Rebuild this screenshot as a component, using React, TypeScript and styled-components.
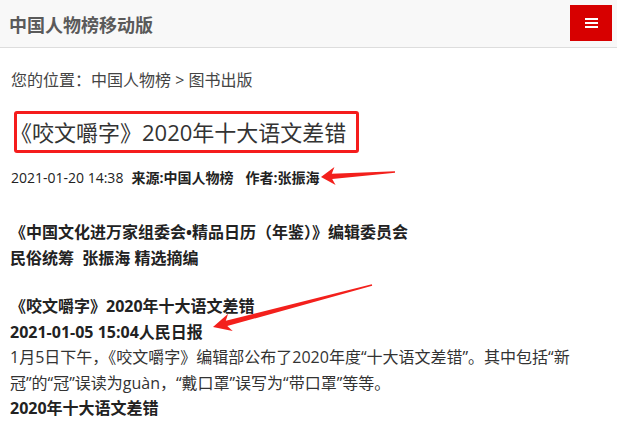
import React from "react";
import styled, { createGlobalStyle } from "styled-components";

const GlobalStyle = createGlobalStyle`
  html, body {
    margin: 0;
    padding: 0;
    background: #ffffff;
  }
  body {
    font-family: "Open Sans", "Noto Sans CJK SC", sans-serif;
    color: #333333;
    width: 617px;
    height: 422px;
    overflow: hidden;
  }
`;

const Page = styled.div`
  position: relative;
  width: 617px;
  height: 422px;
  overflow: hidden;
`;

const Header = styled.header`
  height: 47px;
  background: #f8f8f8;
  border-bottom: 1px solid #dddddd;
  display: flex;
  align-items: center;
  justify-content: space-between;
  padding: 0 5px 0 9px;
`;

const SiteTitle = styled.div`
  font-family: "Noto Sans CJK SC", sans-serif;
  font-size: 18px;
  font-weight: 700;
  color: #5a5a5a;
  line-height: 24px;
  margin-top: 1px;
`;

const MenuButton = styled.button`
  width: 42px;
  height: 36px;
  margin-top: -1px;
  border: none;
  border-radius: 0;
  background: #d70000;
  display: flex;
  flex-direction: column;
  align-items: center;
  justify-content: center;
  gap: 2.2px;
  padding: 0;
`;

const MenuBar = styled.span`
  display: block;
  width: 13px;
  height: 1.8px;
  background: #ffffff;
`;

const Main = styled.main`
  padding: 0 10px;
`;

const Breadcrumb = styled.div`
  margin-top: 20px;
  font-size: 16px;
  line-height: 24px;
  color: #444444;
  padding-left: 1px;
`;

const TitleBox = styled.h1`
  display: inline-block;
  margin: 19px 0 0 4px;
  border: 3px solid #f51c1c;
  border-radius: 3px;
  padding: 0 10px 0 0;
  text-indent: -7px;
  font-size: 22px;
  font-weight: 400;
  line-height: 36px;
  color: #333333;
  white-space: nowrap;
`;

const Meta = styled.div`
  margin-top: 14px;
  font-size: 14px;
  line-height: 22px;
  color: #222222;
  display: flex;
  gap: 8px;
  padding-left: 1px;
`;

const MetaStrong = styled.span<{ $gap?: number }>`
  font-weight: 700;
  color: #222222;
  margin-left: ${(p) => p.$gap ?? 0}px;
`;

const Article = styled.article`
  margin-top: 31px;
  font-size: 16px;
  line-height: 25.5px;
  color: #333333;
`;

const Para = styled.p<{ $bold?: boolean; $space?: number }>`
  margin: ${(p) => p.$space ?? 0}px 0 0 0;
  font-weight: ${(p) => (p.$bold ? 700 : 400)};
  color: ${(p) => (p.$bold ? "#222222" : "#333333")};
`;

const Overlay = styled.svg`
  position: absolute;
  left: 0;
  top: 0;
  width: 617px;
  height: 422px;
  pointer-events: none;
`;

type Pt = [number, number];

function arrowPoints(tail: Pt, tip: Pt, headLen: number, headHalf: number, notch: number, shaftHalf: number, tailHalf: number): string {
  const dx = tip[0] - tail[0];
  const dy = tip[1] - tail[1];
  const len = Math.hypot(dx, dy);
  const ux = dx / len;
  const uy = dy / len;
  const nx = -uy;
  const ny = ux;
  const base: Pt = [tip[0] - headLen * ux, tip[1] - headLen * uy];
  const nc: Pt = [tip[0] - notch * ux, tip[1] - notch * uy];
  const pts: Pt[] = [
    tip,
    [base[0] + headHalf * nx, base[1] + headHalf * ny],
    [nc[0] + shaftHalf * nx, nc[1] + shaftHalf * ny],
    [tail[0] + tailHalf * nx, tail[1] + tailHalf * ny],
    [tail[0] - tailHalf * nx, tail[1] - tailHalf * ny],
    [nc[0] - shaftHalf * nx, nc[1] - shaftHalf * ny],
    [base[0] - headHalf * nx, base[1] - headHalf * ny],
  ];
  return pts.map((p) => `${p[0].toFixed(1)},${p[1].toFixed(1)}`).join(" ");
}

export default function App() {
  return (
    <Page>
      <GlobalStyle />
      <Header>
        <SiteTitle>中国人物榜移动版</SiteTitle>
        <MenuButton aria-label="菜单">
          <MenuBar />
          <MenuBar />
          <MenuBar />
        </MenuButton>
      </Header>
      <Main>
        <Breadcrumb>您的位置：中国人物榜 &gt; 图书出版</Breadcrumb>
        <div>
          <TitleBox>《咬文嚼字》2020年十大语文差错</TitleBox>
        </div>
        <Meta>
          <span>2021-01-20 14:38</span>
          <MetaStrong>来源:中国人物榜</MetaStrong>
          <MetaStrong $gap={4}>作者:张振海</MetaStrong>
        </Meta>
        <Article>
          <Para $bold>
            《中国文化进万家组委会•精品日历（年鉴）》编辑委员会
            <br />
            民俗统筹&nbsp; 张振海 精选摘编
          </Para>
          <Para $bold $space={23}>《咬文嚼字》2020年十大语文差错</Para>
          <Para $bold>2021-01-05 15:04人民日报</Para>
          <Para>
            1月5日下午，《咬文嚼字》编辑部公布了2020年度“十大语文差错”。其中包括“新冠”的“冠”误读为guàn，“戴口罩”误写为“带口罩”等等。
          </Para>
          <Para $bold>2020年十大语文差错</Para>
        </Article>
      </Main>
      <Overlay viewBox="0 0 617 422">
        <polygon fill="#f3201c" points={arrowPoints([395, 172], [321, 177], 14, 9, 11, 2.6, 0.7)} />
        <polygon fill="#f3201c" points={arrowPoints([372, 285], [213, 327], 18, 9, 14, 2.8, 0.7)} />
      </Overlay>
    </Page>
  );
}
